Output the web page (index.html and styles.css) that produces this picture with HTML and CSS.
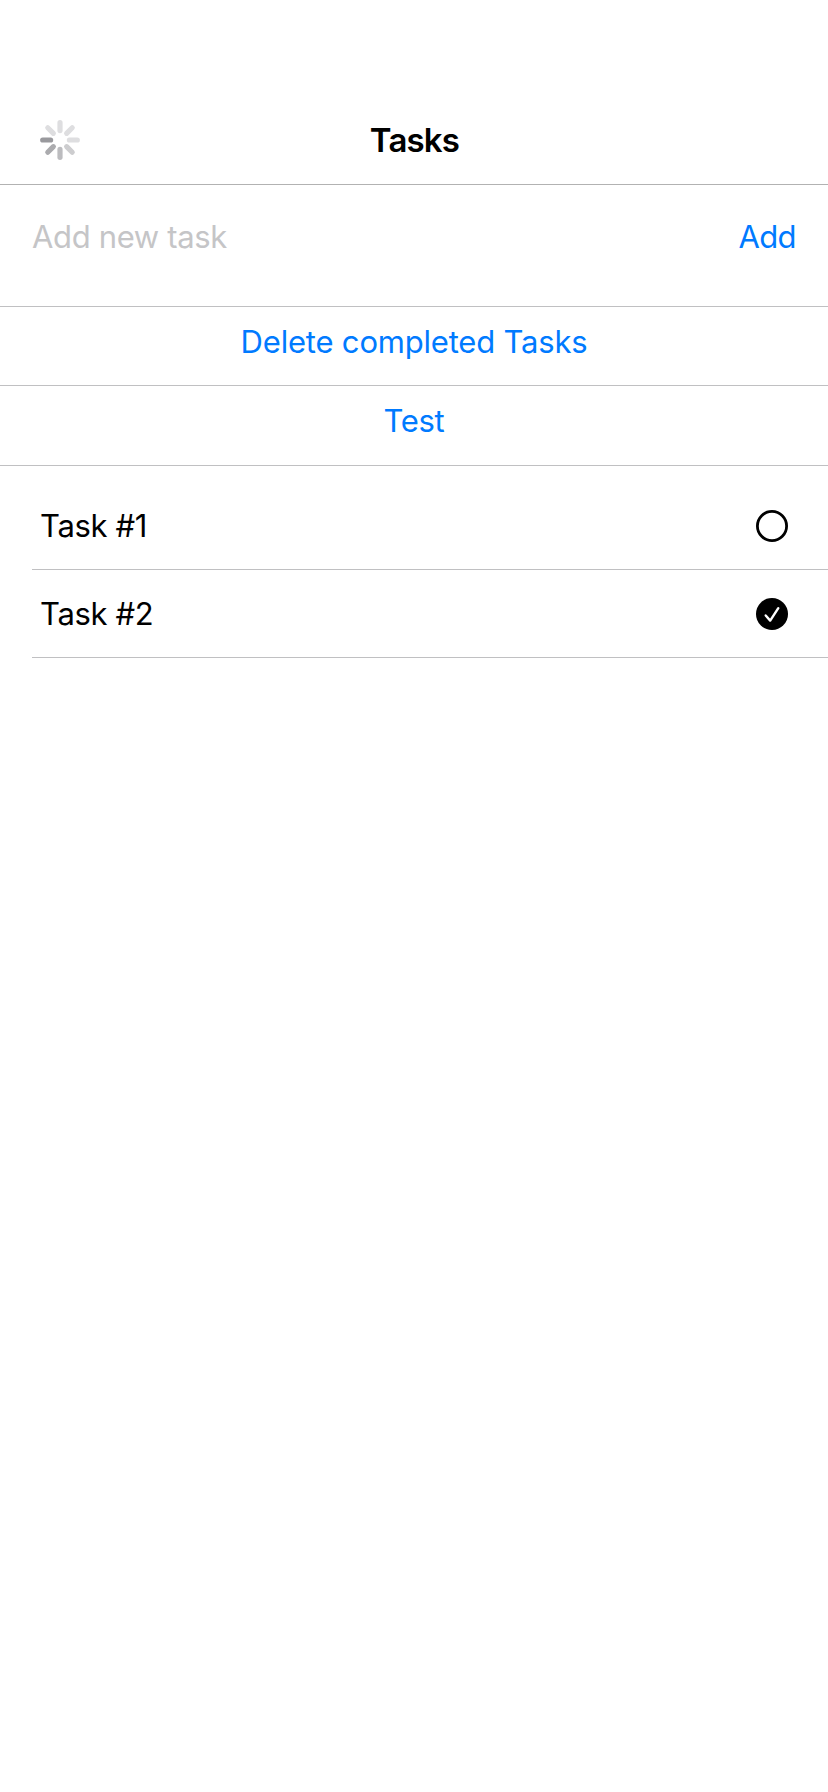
FILE: index.html
```html
<!DOCTYPE html>
<html lang="en">
<head>
<meta charset="utf-8">
<title>Tasks</title>
<link rel="stylesheet" href="styles.css">
</head>
<body>
<header class="navbar">
  <svg class="spinner" width="40" height="40" viewBox="-20 -20 40 40" stroke-width="5.2" stroke-linecap="round">
    <path d="M0-9.4V-17.3" stroke="#dedee0"/>
    <path d="M0-9.4V-17.3" stroke="#dedee0" transform="rotate(45)"/>
    <path d="M0-9.4V-17.3" stroke="#dedee0" transform="rotate(90)"/>
    <path d="M0-9.4V-17.3" stroke="#cdcdcf" transform="rotate(135)"/>
    <path d="M0-9.4V-17.3" stroke="#bcbcbf" transform="rotate(180)"/>
    <path d="M0-9.4V-17.3" stroke="#ababae" transform="rotate(225)"/>
    <path d="M0-9.4V-17.3" stroke="#99999d" transform="rotate(270)"/>
    <path d="M0-9.4V-17.3" stroke="#dedee0" transform="rotate(315)"/>
  </svg>
  <h1 class="title">Tasks</h1>
</header>
<main>
  <section class="add-row">
    <span class="placeholder">Add new task</span>
    <a class="link link-add">Add</a>
  </section>
  <div class="action"><a class="link link-delete">Delete completed Tasks</a></div>
  <div class="action action-last"><a class="link">Test</a></div>
  <ul class="tasks">
    <li class="task">
      <span class="name">Task #1</span>
      <svg width="32" height="32" viewBox="0 0 32 32"><circle cx="16" cy="16" r="14.6" fill="none" stroke="#000" stroke-width="2.8"/></svg>
    </li>
    <li class="task">
      <span class="name">Task #2</span>
      <svg width="32" height="32" viewBox="0 0 32 32"><circle cx="16" cy="16" r="16"/><path d="M9.7 17.5 14.2 22.6 22.3 10.2" fill="none" stroke="#fff" stroke-width="2.4" stroke-linecap="round" stroke-linejoin="round"/></svg>
    </li>
  </ul>
</main>
</body>
</html>
```
FILE: styles.css
```css
* { box-sizing: border-box; }
body {
  margin: 0;
  background: #fff;
  color: #000;
  font: 31px/40px Inter, "Liberation Sans", sans-serif;
  letter-spacing: -0.35px;
}
svg { display: block; }
.navbar {
  display: grid;
  grid-template-columns: 40px 1fr 40px;
  align-items: center;
  height: 185px;
  padding: 96px 40px 0;
  border-bottom: 1px solid #b2b2b2;
}
.title {
  margin: 0;
  padding-left: 1px;
  text-align: center;
  font-size: 33px;
  font-weight: 600;
  letter-spacing: -0.8px;
}
.add-row {
  display: flex;
  justify-content: space-between;
  height: 122px;
  padding: 32px 32px 0 32px;
  border-bottom: 1px solid #c0c0c2;
}
.placeholder { color: #c5c5c7; }
.link { color: #007aff; }
.link-add { letter-spacing: -0.6px; }
.link-delete { letter-spacing: -0.2px; }
.action {
  height: 79px;
  padding-top: 15px;
  text-align: center;
  border-bottom: 1px solid #c0c0c2;
}
.action-last { height: 80px; }
.tasks {
  margin: 0;
  padding: 16px 0 0 32px;
  list-style: none;
}
.task {
  display: flex;
  justify-content: space-between;
  align-items: center;
  height: 88px;
  padding: 1px 40px 0 8px;
  border-bottom: 1px solid #c0c0c2;
}
```
